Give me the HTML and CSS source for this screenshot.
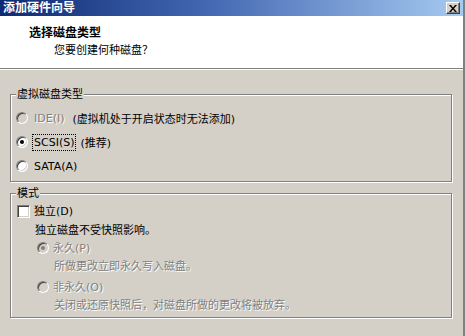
FILE: index.html
```html
<!DOCTYPE html>
<html lang="zh-CN">
<head>
    <meta charset="UTF-8">
    <title>添加硬件向导</title>
    <link rel="stylesheet" href="styles.css">
</head>
<body>
    <div class="window">
        <div class="titlebar">
            <span class="title">添加硬件向导</span>
            <span class="close-btn">
                <svg width="8" height="7" viewBox="0 0 8 7">
                    <path d="M0 0h2l2 2.5L6 0h2L5 3.5 8 7H6L4 4.5 2 7H0l3-3.5z" fill="#000"/>
                </svg>
            </span>
        </div>

        <div class="header">
            <div class="header-title">选择磁盘类型</div>
            <div class="header-sub">您要创建何种磁盘？</div>
        </div>

        <div class="group group-type">
            <div class="group-title">虚拟磁盘类型</div>
            <div class="row">
                <span class="radio disabled"></span>
                <span class="label muted">IDE(I)</span>
                <span class="note">(虚拟机处于开启状态时无法添加)</span>
            </div>
            <div class="row">
                <span class="radio checked"></span>
                <span class="label focus">SCSI(S)</span>
                <span class="note tight">(推荐)</span>
            </div>
            <div class="row">
                <span class="radio"></span>
                <span class="label">SATA(A)</span>
            </div>
        </div>

        <div class="group group-mode">
            <div class="group-title">模式</div>
            <div class="check-row">
                <span class="checkbox"></span>
                <span class="label">独立(D)</span>
            </div>
            <div class="mode-info">独立磁盘不受快照影响。</div>
            <div class="sub-row">
                <span class="radio disabled checked"></span>
                <span class="label muted">永久(P)</span>
            </div>
            <div class="sub-desc muted">所做更改立即永久写入磁盘。</div>
            <div class="sub-row second">
                <span class="radio disabled"></span>
                <span class="label muted">非永久(O)</span>
            </div>
            <div class="sub-desc muted">关闭或还原快照后，对磁盘所做的更改将被放弃。</div>
        </div>
    </div>
</body>
</html>
```

FILE: styles.css
```css
body {
    margin: 0;
    font-family: "DejaVu Sans", "Noto Sans CJK SC", sans-serif;
    font-size: 11px;
    color: #000;
}
.window {
    width: 463px;
    height: 336px;
    background: #d4d0c8;
    border-right: 2px solid #808080;
    overflow: hidden;
}
.titlebar {
    height: 16px;
    display: flex;
    align-items: center;
    padding: 0 3px;
    background: linear-gradient(to right, #0e2a74, #4468b2 45%, #a6caf0);
}
.title {
    color: #fff;
    font-weight: bold;
    font-size: 12px;
    line-height: 16px;
}
.close-btn {
    margin-left: auto;
    width: 12px;
    height: 10px;
    display: flex;
    align-items: center;
    justify-content: center;
    background: #d4d0c8;
    border: 1px solid;
    border-color: #fff #404040 #404040 #fff;
    box-shadow: inset -1px -1px 0 #808080;
}
.header {
    height: 52px;
    background: #fff;
    border-bottom: 1px solid #808080;
    box-shadow: 0 1px 0 #fff;
}
.header-title {
    padding: 10px 0 0 29px;
    font-size: 12px;
    font-weight: bold;
    line-height: 14px;
}
.header-sub {
    padding: 4px 0 0 54px;
    line-height: 14px;
}
.group {
    margin: 0 11px 0 10px;
    border: 1px solid #808080;
    box-shadow: 1px 1px 0 #fff, inset 1px 1px 0 #fff;
}
.group-type {
    margin-top: 25px;
    padding-bottom: 3px;
}
.group-mode {
    margin-top: 11px;
    padding-bottom: 4px;
}
.group-title {
    width: fit-content;
    margin: -7px 0 0 5px;
    padding: 0 1px;
    height: 13px;
    line-height: 13px;
    background: #d4d0c8;
}
.row {
    height: 24px;
    display: flex;
    align-items: center;
    padding-left: 5px;
}
.group-title + .row {
    margin-top: 5px;
}
.label {
    line-height: 13px;
    margin-left: 6px;
}
.focus {
    outline: 1px dotted #000;
    outline-offset: 1px;
}
.note {
    margin-left: 8px;
}
.note.tight {
    margin-left: 6px;
}
.muted {
    color: #808080;
    text-shadow: 1px 1px 0 #fff;
}
.radio {
    position: relative;
    flex: none;
    width: 10px;
    height: 10px;
    border-radius: 50%;
    background: #fff;
    border: 1px solid;
    border-color: #808080 #fff #fff #808080;
    box-shadow: inset 1px 1px 0 #404040, inset -1px -1px 0 #d4d0c8;
}
.radio.disabled {
    background: #d4d0c8;
}
.radio.checked::after {
    content: "";
    position: absolute;
    left: 3px;
    top: 3px;
    width: 4px;
    height: 4px;
    border-radius: 50%;
    background: #000;
}
.radio.disabled.checked::after {
    background: #808080;
}
.check-row {
    height: 20px;
    margin-top: 1px;
    display: flex;
    align-items: center;
    padding-left: 6px;
}
.checkbox {
    flex: none;
    width: 11px;
    height: 11px;
    background: #fff;
    border: 1px solid;
    border-color: #808080 #fff #fff #808080;
    box-shadow: inset 1px 1px 0 #404040, inset -1px -1px 0 #d4d0c8;
}
.check-row .label {
    margin-left: 4px;
}
.mode-info {
    height: 20px;
    line-height: 20px;
    padding-left: 24px;
}
.sub-row {
    height: 14px;
    display: flex;
    align-items: center;
    padding-left: 26px;
}
.sub-row .label {
    margin-left: 4px;
}
.sub-row.second {
    margin-top: 6px;
}
.sub-desc {
    margin-top: 5px;
    height: 14px;
    line-height: 14px;
    padding-left: 43px;
}
```
